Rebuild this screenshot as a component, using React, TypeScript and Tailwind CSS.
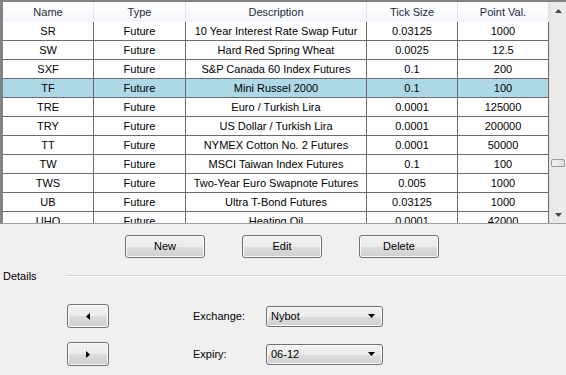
import React from "react";

const rows = [
  ["SR", "Future", "10 Year Interest Rate Swap Futur", "0.03125", "1000"],
  ["SW", "Future", "Hard Red Spring Wheat", "0.0025", "12.5"],
  ["SXF", "Future", "S&P Canada 60 Index Futures", "0.1", "200"],
  ["TF", "Future", "Mini Russel 2000", "0.1", "100"],
  ["TRE", "Future", "Euro / Turkish Lira", "0.0001", "125000"],
  ["TRY", "Future", "US Dollar / Turkish Lira", "0.0001", "200000"],
  ["TT", "Future", "NYMEX Cotton No. 2 Futures", "0.0001", "50000"],
  ["TW", "Future", "MSCI Taiwan Index Futures", "0.1", "100"],
  ["TWS", "Future", "Two-Year Euro Swapnote Futures", "0.005", "1000"],
  ["UB", "Future", "Ultra T-Bond Futures", "0.03125", "1000"],
  ["UHO", "Future", "Heating Oil", "0.0001", "42000"],
];

const widths = ["w-[91px]", "w-[92px]", "w-[181px]", "w-[91px]", "w-[91px]"];
const headers = ["Name", "Type", "Description", "Tick Size", "Point Val."];

const face =
  "border border-[#707070] rounded-[3px] bg-[linear-gradient(to_bottom,#f2f2f2_0%,#ebebeb_50%,#dddddd_51%,#cfcfcf_100%)] shadow-[inset_0_0_0_1px_#fbfbfb] flex items-center text-black";
const btn = `${face} justify-center`;

function Combo({ value }: { value: string }) {
  return (
    <div className={`${face} justify-between w-[117px] h-[21px] pl-[4px] pr-[7px]`}>
      <span>{value}</span>
      <svg width="7" height="4" viewBox="0 0 7 4">
        <polygon points="0,0 7,0 3.5,4" fill="#000" />
      </svg>
    </div>
  );
}

export default function App() {
  return (
    <div className="w-[566px] h-[375px] bg-[#f0f0f0] font-['Liberation_Sans',Arial,sans-serif] text-[11px] text-black overflow-hidden">
      {/* Grid */}
      <div className="h-[224px] flex border-t-2 border-l-[3px] border-b border-[#828282] border-b-[#a0a0a0] bg-white">
        <div className="flex-1 overflow-hidden">
          <div className="flex h-[20px] bg-[linear-gradient(to_bottom,#ffffff,#f3f6fa)] text-[#1e2a3b]">
            {headers.map((h, i) => (
              <div key={h} className={`${widths[i]} shrink-0 flex items-center justify-center border-r border-[#e2e5ea]`}>
                {h}
              </div>
            ))}
          </div>
          {rows.map((r) => (
            <div key={r[0]} className={`flex h-[19px] border-b border-[#6b6b6b] ${r[0] === "TF" ? "bg-[#add8e6]" : "bg-white"}`}>
              {r.map((c, i) => (
                <div key={i} className={`${widths[i]} shrink-0 flex items-center justify-center border-r border-[#6b6b6b] whitespace-nowrap overflow-hidden`}>
                  {c}
                </div>
              ))}
            </div>
          ))}
        </div>
        {/* Scrollbar */}
        <div className="w-[17px] shrink-0 bg-[#eaeaea] border-l border-[#e4e4e4] flex flex-col items-center">
          <div className="h-[17px] flex items-center justify-center">
            <svg width="7" height="4" viewBox="0 0 7 4">
              <polygon points="3.5,0 7,4 0,4" fill="#4a4a4a" />
            </svg>
          </div>
          <div className="flex-1 w-full relative">
            <div className="absolute left-[1px] right-[1px] top-[140px] h-[8px] rounded-[2px] border border-[#9a9a9a] bg-[linear-gradient(to_right,#f2f2f2,#dcdcdc)]" />
          </div>
          <div className="h-[17px] flex items-center justify-center">
            <svg width="7" height="4" viewBox="0 0 7 4">
              <polygon points="0,0 7,0 3.5,4" fill="#4a4a4a" />
            </svg>
          </div>
        </div>
      </div>

      {/* Action buttons */}
      <div className="flex gap-[37px] pl-[125px] pt-[11px]">
        <button className={`${btn} w-[80px] h-[23px]`}>New</button>
        <button className={`${btn} w-[80px] h-[23px]`}>Edit</button>
        <button className={`${btn} w-[80px] h-[23px]`}>Delete</button>
      </div>

      {/* Details */}
      <div className="flex items-center h-[14px] mt-[11px]">
        <span className="pl-[3px] w-[66px]">Details</span>
        <div className="flex-1 h-[2px] border-t border-[#d5d5d5] border-b border-b-white" />
      </div>

      <div className="flex flex-col gap-[14px] mt-[21px]">
        <div className="flex items-center h-[24px]">
          <button className={`${btn} w-[42px] h-[24px] ml-[67px]`}>
            <svg width="4" height="7" viewBox="0 0 4 7">
              <polygon points="4,0 4,7 0,3.5" fill="#000" />
            </svg>
          </button>
          <span className="ml-[84px] w-[73px]">Exchange:</span>
          <Combo value="Nybot" />
        </div>
        <div className="flex items-center h-[24px]">
          <button className={`${btn} w-[42px] h-[24px] ml-[67px]`}>
            <svg width="4" height="7" viewBox="0 0 4 7">
              <polygon points="0,0 4,3.5 0,7" fill="#000" />
            </svg>
          </button>
          <span className="ml-[84px] w-[73px]">Expiry:</span>
          <Combo value="06-12" />
        </div>
      </div>
    </div>
  );
}
